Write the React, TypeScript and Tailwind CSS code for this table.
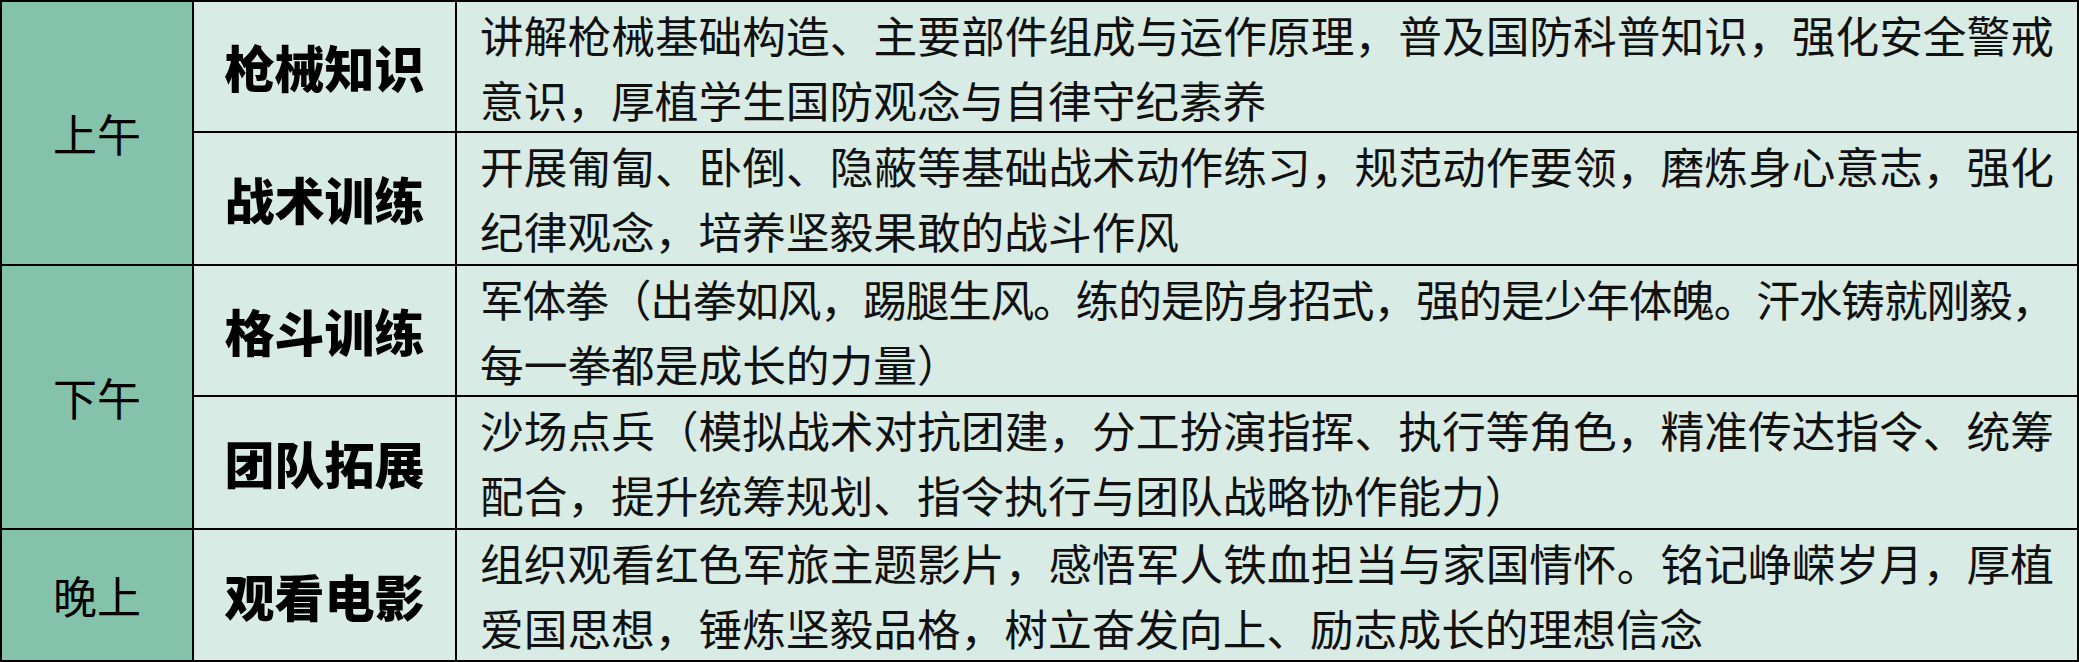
import React from "react";

// ── Data ─────────────────────────────────────────────────────────────────────
type Item = { title: string; lines: string[]; tight?: boolean };
type Block = { period: string; items: Item[] };

const schedule: Block[] = [
  {
    period: "上午",
    items: [
      {
        title: "枪械知识",
        lines: [
          "讲解枪械基础构造、主要部件组成与运作原理，普及国防科普知识，强化安全警戒",
          "意识，厚植学生国防观念与自律守纪素养",
        ],
      },
      {
        title: "战术训练",
        lines: [
          "开展匍匐、卧倒、隐蔽等基础战术动作练习，规范动作要领，磨炼身心意志，强化",
          "纪律观念，培养坚毅果敢的战斗作风",
        ],
      },
    ],
  },
  {
    period: "下午",
    items: [
      {
        title: "格斗训练",
        tight: true,
        lines: [
          "军体拳（出拳如风，踢腿生风。练的是防身招式，强的是少年体魄。汗水铸就刚毅，",
          "每一拳都是成长的力量）",
        ],
      },
      {
        title: "团队拓展",
        lines: [
          "沙场点兵（模拟战术对抗团建，分工扮演指挥、执行等角色，精准传达指令、统筹",
          "配合，提升统筹规划、指令执行与团队战略协作能力）",
        ],
      },
    ],
  },
  {
    period: "晚上",
    items: [
      {
        title: "观看电影",
        lines: [
          "组织观看红色军旅主题影片，感悟军人铁血担当与家国情怀。铭记峥嵘岁月，厚植",
          "爱国思想，锤炼坚毅品格，树立奋发向上、励志成长的理想信念",
        ],
      },
    ],
  },
];

// ── Cells ────────────────────────────────────────────────────────────────────
function PeriodCell({ label, span }: { label: string; span: number }) {
  return (
    <div
      className={`${span === 2 ? "row-span-2" : "row-span-1"} flex items-center justify-center border-r-2 border-b-2 border-black bg-[#84c2ab] text-[44px] text-black`}
    >
      {label}
    </div>
  );
}

function TitleCell({ title }: { title: string }) {
  return (
    <div className="flex items-center justify-center border-r-2 border-b-2 border-black bg-[#d8ebe4] text-[50px] font-black text-black">
      {title}
    </div>
  );
}

function DescCell({ lines, tight }: { lines: string[]; tight?: boolean }) {
  return (
    <div className="border-r-2 border-b-2 border-black bg-[#d8ebe4] px-[23px] text-[43.7px] leading-[65px] text-[#111]">
      {lines.map((line, i) => {
        const last = i === lines.length - 1;
        return (
          <div
            key={i}
            className={`whitespace-nowrap ${last ? "text-left" : "text-justify [text-align-last:justify]"} ${
              tight && !last ? "tracking-[-1.2px]" : ""
            }`}
          >
            {line}
          </div>
        );
      })}
    </div>
  );
}

export default function App() {
  return (
    <div className="w-[2079px] h-[662px] overflow-hidden bg-white font-['Noto_Sans_CJK_SC','Noto_Sans',sans-serif]">
      <div className="grid grid-cols-[192px_263px_1622px] grid-rows-[131px_133px_131px_133px_132px] border-l-2 border-t-2 border-black">
        {schedule.map((block) =>
          block.items.map((item, idx) => (
            <React.Fragment key={item.title}>
              {idx === 0 && <PeriodCell label={block.period} span={block.items.length} />}
              <TitleCell title={item.title} />
              <DescCell lines={item.lines} tight={item.tight} />
            </React.Fragment>
          ))
        )}
      </div>
    </div>
  );
}
